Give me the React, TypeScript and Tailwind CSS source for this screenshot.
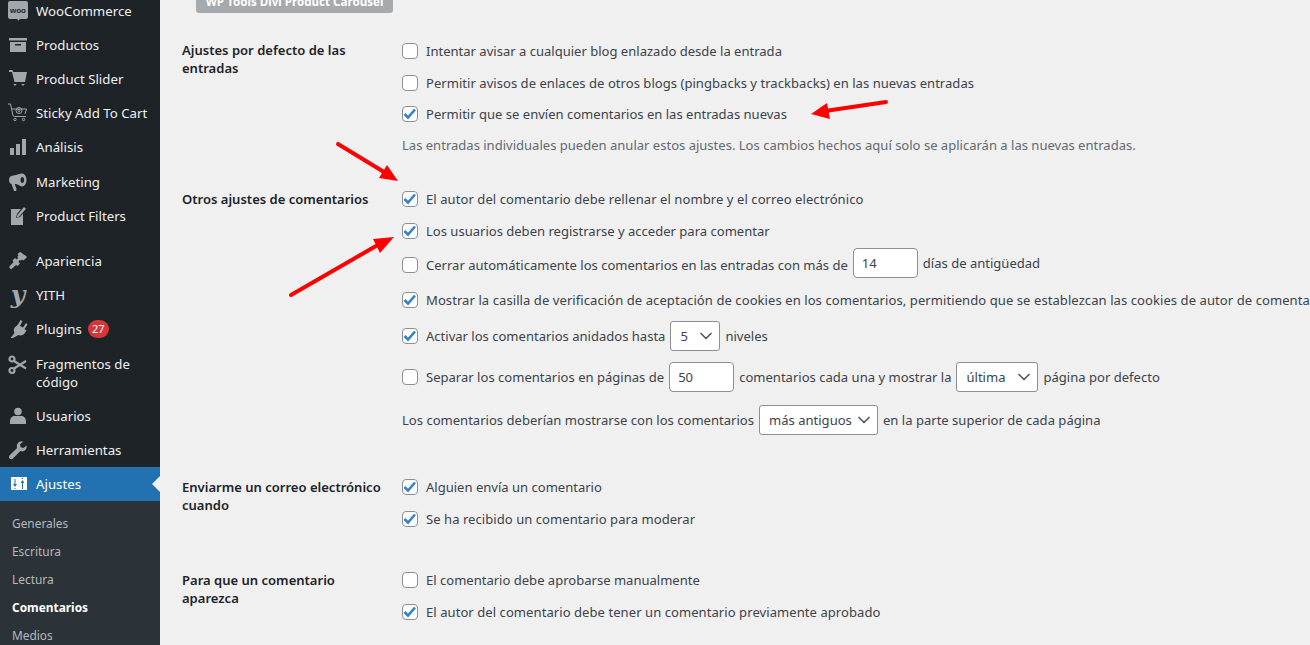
import React from 'react';
import { ChevronDown } from 'lucide-react';

const iconClass = 'w-5 h-5 fill-[#a2a7ab]';

const WooIcon = () => (
  <svg viewBox="0 0 20 20" className={iconClass}>
    <path d="M2 0h16a2 2 0 0 1 2 2v14a2 2 0 0 1-2 2h-6l-2 2-.500-2H2a2 2 0 0 1-2-2V2a2 2 0 0 1 2-2z" />
    <text x="10" y="11.500" textAnchor="middle" fontSize="8" fontWeight="700" fill="#1d2327" fontFamily="Liberation Sans, sans-serif">woo</text>
  </svg>
);
const BoxIcon = () => (
  <svg viewBox="0 0 20 20" className={iconClass}>
    <path d="M1 3h18v2.500H1zM2 7h16v10H2zm5 2v1.500h6V9z" fillRule="evenodd" />
  </svg>
);
const CartIcon = () => (
  <svg viewBox="0 0 20 20" className={iconClass}>
    <path d="M1 1h3.500l.8 2H19l-2 10H6.500L4 3H1zM5.500 15h3a1.500 1.500 0 1 1-3 0zM13.500 15h3a1.500 1.500 0 1 1-3 0z" />
  </svg>
);
const StickyCartIcon = () => (
  <svg viewBox="0 0 20 20" className="w-5 h-5 fill-none stroke-[#a2a7ab]" strokeWidth="1">
    <path d="M0 1h2.500l2.500 11.500q.3 1 1.500 1H18M4 6h14.500l-1.500 5" />
    <circle cx="11" cy="7.500" r="3" />
    <circle cx="11" cy="7.500" r="1" />
    <circle cx="7" cy="16.500" r="1.200" />
    <circle cx="15.500" cy="16.500" r="1.200" />
  </svg>
);
const BarsIcon = () => (
  <svg viewBox="0 0 20 20" className={iconClass}>
    <path d="M2 11h4v7H2zM8 7h4v11H8zM14 2h4v16h-4z" />
  </svg>
);
const MegaphoneIcon = () => (
  <svg viewBox="0 0 20 20" className={iconClass}>
    <path d="M14 1.500c2.800 0 4.500 3 4.500 6.500s-1.700 6.500-4.500 6.500c-1.500 0-3-1.700-6-2.500L6.800 12l1.800 5.500-.5 1.500H6l-2.500-7C1.800 11.500 1 10 1 8s1-4 3-4.200C8 3.500 11.500 1.500 14 1.500zm.3 3.500c-1 0-1.800 1.300-1.800 3s.8 3 1.800 3 1.800-1.300 1.800-3-.8-3-1.800-3z" fillRule="evenodd" />
  </svg>
);
const FilterIcon = () => (
  <svg viewBox="0 0 20 20" className={iconClass}>
    <path d="M3 3h10l-4 5-1 4 4-1 3-3.500V19H3zM16 1l2 1.800-7 8-2.200.6.600-2.300z" />
  </svg>
);
const BrushIcon = () => (
  <svg viewBox="0 0 20 20" className={iconClass}>
    <path d="M12 1l2 1 1.500 1.500 2 1L19 6l-3.500 3.500-1.500-1-1 1-1.500-.5L10.500 11l1.500 1.500-2.500 2.500-1.500-1-5 4.500-2-2.500L5.500 11 4.500 9.500 7 7l1.500 1.500L10 7l-.5-1.500 1-1-1-1.500z" />
  </svg>
);
const PlugIcon = () => (
  <svg viewBox="0 0 20 20" className={iconClass}>
    <path d="M12.500 1l2 1-2.500 5 3 1.500 3-4.500 1.500 1.500-3 4.500 2 1.500-2 3c-1.500 1.800-4 2.500-6 1.500L5 19H2.500l4-5c-1-1.800-1-4 .200-5.500L10 5.500z" />
  </svg>
);
const ScissorsIcon = () => (
  <svg viewBox="0 0 20 20" className="w-5 h-5 fill-none stroke-[#a2a7ab]" strokeWidth="2.200">
    <circle cx="4" cy="4" r="2.500" />
    <circle cx="4" cy="15.500" r="2.500" />
    <path d="M6 6l12 7.500M6 13.500L18 6" />
  </svg>
);
const UserIcon = () => (
  <svg viewBox="0 0 20 20" className={iconClass}>
    <circle cx="10" cy="5.500" r="3.800" />
    <path d="M2 18v-3c0-3 2.500-5 4.500-5h7c2 0 4.500 2 4.500 5v3z" />
  </svg>
);
const WrenchIcon = () => (
  <svg viewBox="0 0 20 20" className={iconClass}>
    <path d="M18.500 5.500c.5 2-.2 4-2 5.200-1.300.8-2.800.9-4.200.4L5 18.500c-1 1-2.500 1-3.400 0-.9-1-.8-2.400.1-3.300l7.400-7.300c-.5-1.400-.3-3 .5-4.300C10.800 1.800 13 1 15 1.500l-3 3 .7 2.800 2.800.7z" />
  </svg>
);
const SlidersIcon = () => (
  <svg viewBox="0 0 20 20" className="w-5 h-5">
    <path d="M3 3h16v13H3z" fill="#fff" />
    <path d="M6.500 5h1v5h1.500l-2 3-2-3h1.500zM6.500 14h1v1h-1zM14 15v-6h-1.500l2-3 2 3H15v6zM14 4h1v1h-1z" fill="#2271b1" />
  </svg>
);

interface MenuItem {
  label: string;
  icon: React.ReactNode;
  badge?: string;
  cls: string;
}

const menu: MenuItem[] = [
  { label: 'WooCommerce', icon: <WooIcon />, cls: 'h-[34px] items-center' },
  { label: 'Productos', icon: <BoxIcon />, cls: 'h-[34px] items-center' },
  { label: 'Product Slider', icon: <CartIcon />, cls: 'h-[34px] items-center' },
  { label: 'Sticky Add To Cart', icon: <StickyCartIcon />, cls: 'h-[34px] items-center' },
  { label: 'Análisis', icon: <BarsIcon />, cls: 'h-[34px] items-center' },
  { label: 'Marketing', icon: <MegaphoneIcon />, cls: 'h-[34px] items-center mt-px' },
  { label: 'Product Filters', icon: <FilterIcon />, cls: 'h-[34px] items-center' },
  { label: 'Apariencia', icon: <BrushIcon />, cls: 'h-[34px] items-center mt-[11px]' },
  { label: 'YITH', icon: <span className="text-[#a2a7ab] text-[25px] leading-5 font-bold italic font-['DejaVu_Serif',serif]">y</span>, cls: 'h-[34px] items-center' },
  { label: 'Plugins', icon: <PlugIcon />, badge: '27', cls: 'h-[34px] items-center' },
  { label: 'Fragmentos de código', icon: <ScissorsIcon />, cls: 'h-[53px] pt-[9px]' },
  { label: 'Usuarios', icon: <UserIcon />, cls: 'h-[34px] items-center' },
  { label: 'Herramientas', icon: <WrenchIcon />, cls: 'h-[34px] items-center' },
];

const subItems = ['Generales', 'Escritura', 'Lectura', 'Comentarios', 'Medios'];

const Sidebar = () => (
  <aside className="w-40 shrink-0 bg-[#1d2327] text-white text-[13.25px] leading-[18px] -mt-[6px]">
    {menu.map((item) => (
      <div key={item.label} className={`flex ${item.cls}`}>
        <div className="w-9 flex justify-center shrink-0">{item.icon}</div>
        <span className="w-[118px] text-[#f0f0f1]">
          {item.label}
          {item.badge && (
            <span className="ml-[6px] inline-block w-[21px] h-[18px] rounded-full bg-[#d63638] text-white text-[11px] text-center align-top">{item.badge}</span>
          )}
        </span>
      </div>
    ))}
    <div className="relative flex items-center h-[34px] bg-[#2271b1] text-white">
      <div className="w-9 flex justify-center shrink-0"><SlidersIcon /></div>
      Ajustes
      <div className="absolute right-0 top-[9px] border-y-8 border-r-8 border-y-transparent border-r-[#f0f0f1]" />
    </div>
    <div className="bg-[#2c3338] pt-2 pb-5 text-[11.9px]">
      {subItems.map((s) => (
        <div key={s} className={`h-7 pl-3 flex items-center ${s === 'Comentarios' ? 'font-bold text-white' : 'text-[#b4b9be]'}`}>{s}</div>
      ))}
    </div>
  </aside>
);

const Check = ({ on }: { on?: boolean }) => (
  <span className="w-4 h-4 shrink-0 rounded-[4px] border border-[#8c8f94] bg-white flex items-center justify-center mr-2">
    {on && (
      <svg viewBox="0 0 16 16" className="w-4 h-4 shrink-0 fill-none stroke-[#3582c4]" strokeWidth="2.600">
        <path d="M2.500 8l3.500 3.500L13 3.500" />
      </svg>
    )}
  </span>
);

const Select = ({ value, width }: { value: string; width: string }) => (
  <span className={`${width} h-[30px] shrink-0 mx-[5px] pl-[9px] pr-[3px] flex items-center justify-between bg-white border border-[#8c8f94] rounded-[3px]`}>
    {value}
    <ChevronDown className="w-5 h-5 text-[#50575e]" strokeWidth={2} />
  </span>
);

const TextBox = ({ value, width }: { value: string; width: string }) => (
  <span className={`${width} h-[30px] shrink-0 mx-[5px] pl-2 flex items-center bg-white border border-[#8c8f94] rounded-[4px]`}>{value}</span>
);

const Row = ({ h, children }: { h: string; children: React.ReactNode }) => (
  <div className={`${h} flex items-center whitespace-nowrap`}>{children}</div>
);

const Section = ({ title, className, children }: { title: React.ReactNode; className: string; children: React.ReactNode }) => (
  <section className={`flex ${className}`}>
    <h2 className="w-[242px] pl-[22px] pr-[20px] pt-[7px] shrink-0 font-semibold text-[#1d2327]">{title}</h2>
    <div>{children}</div>
  </section>
);

const Arrow = ({ line, head }: { line: string; head: string }) => (
  <>
    <path d={line} fill="none" stroke="#ff0000" strokeWidth="4" strokeLinecap="round" />
    <polygon points={head} fill="#ff0000" />
  </>
);

export default function App() {
  return (
    <div className="relative h-[645px] w-full overflow-hidden flex bg-[#f0f0f1] font-['Noto_Sans',sans-serif] text-[13.04px] leading-[18px] text-[#3c434a]">
      <Sidebar />
      <main className="flex-1 min-w-0 overflow-hidden">
        <div className="ml-9 -mt-[9px] w-[197px] h-[22px] rounded-[3px] bg-[#a7aaad] text-white text-[11.6px] font-bold whitespace-nowrap flex items-center justify-center">
          WP Tools Divi Product Carousel
        </div>

        <Section title={<>Ajustes por defecto de las entradas</>} className="mt-[21px]">
          <Row h="h-[34px]"><Check />Intentar avisar a cualquier blog enlazado desde la entrada</Row>
          <Row h="h-[30px] tracking-[0.035px]"><Check />Permitir avisos de enlaces de otros blogs (pingbacks y trackbacks) en las nuevas entradas</Row>
          <Row h="h-[32px]"><Check on />Permitir que se envíen comentarios en las entradas nuevas</Row>
          <Row h="h-[30px]"><span className="text-[#646970]">Las entradas individuales pueden anular estos ajustes. Los cambios hechos aquí solo se aplicarán a las nuevas entradas.</span></Row>
        </Section>

        <Section title="Otros ajustes de comentarios" className="mt-[23px]">
          <Row h="h-8 tracking-[0.07px]"><Check on />El autor del comentario debe rellenar el nombre y el correo electrónico</Row>
          <Row h="h-8"><Check on />Los usuarios deben registrarse y acceder para comentar</Row>
          <Row h="h-8">
            <span className="flex items-center mt-1"><Check />Cerrar automáticamente los comentarios en las entradas con más de</span>
            <TextBox value="14" width="w-[65px]" />días de antigüedad
          </Row>
          <Row h="h-[41px] tracking-[0.07px]"><Check on />Mostrar la casilla de verificación de aceptación de cookies en los comentarios, permitiendo que se establezcan las cookies de autor de comentarios.</Row>
          <Row h="h-8"><Check on />Activar los comentarios anidados hasta<Select value="5" width="w-[50px]" />niveles</Row>
          <Row h="h-[50px] tracking-[0.01px]"><Check />Separar los comentarios en páginas de<TextBox value="50" width="w-[65px]" />comentarios cada una y mostrar la<Select value="última" width="w-[82px]" />página por defecto</Row>
          <Row h="h-9 tracking-[0.01px]">Los comentarios deberían mostrarse con los comentarios<Select value="más antiguos" width="w-[119px]" />en la parte superior de cada página</Row>
        </Section>

        <Section title="Enviarme un correo electrónico cuando" className="mt-[33px]">
          <Row h="h-8"><Check on />Alguien envía un comentario</Row>
          <Row h="h-8 tracking-[0.05px]"><Check on />Se ha recibido un comentario para moderar</Row>
        </Section>

        <Section title="Para que un comentario aparezca" className="mt-[29px]">
          <Row h="h-8"><Check />El comentario debe aprobarse manualmente</Row>
          <Row h="h-8 tracking-[0.06px]"><Check on />El autor del comentario debe tener un comentario previamente aprobado</Row>
        </Section>
      </main>

      <svg className="absolute inset-0 pointer-events-none" width="1310" height="645">
        <Arrow line="M886 102L825 111" head="811,114 827,103 830,119" />
        <Arrow line="M338 144L384 172" head="398,181 387,165 379,178" />
        <Arrow line="M291 295L376 246" head="394,237 373,239 380,253" />
      </svg>
    </div>
  );
}
